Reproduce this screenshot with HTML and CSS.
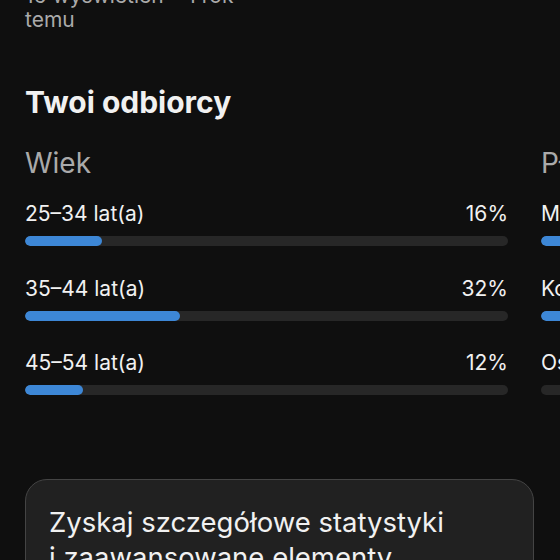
FILE: index.html
```html
<!DOCTYPE html>
<html lang="pl">
<head>
<meta charset="utf-8">
<link rel="stylesheet" href="styles.css">
</head>
<body>
<main class="page">
  <p class="meta">16 wyświetleń • 1 rok temu</p>
  <h2 class="title">Twoi odbiorcy</h2>
  <div class="columns">
    <section class="col">
      <h3 class="col-title">Wiek</h3>
      <div class="row">
        <div class="row-head"><span>25–34 lat(a)</span><span>16%</span></div>
        <div class="track"><div class="fill" style="width:16%"></div></div>
      </div>
      <div class="row">
        <div class="row-head"><span>35–44 lat(a)</span><span>32%</span></div>
        <div class="track"><div class="fill" style="width:32%"></div></div>
      </div>
      <div class="row">
        <div class="row-head"><span>45–54 lat(a)</span><span>12%</span></div>
        <div class="track"><div class="fill" style="width:12%"></div></div>
      </div>
    </section>
    <section class="col">
      <h3 class="col-title">Płeć</h3>
      <div class="row">
        <div class="row-head"><span>Mężczyźni</span><span>72%</span></div>
        <div class="track"><div class="fill" style="width:72%"></div></div>
      </div>
      <div class="row">
        <div class="row-head"><span>Kobiety</span><span>28%</span></div>
        <div class="track"><div class="fill" style="width:28%"></div></div>
      </div>
      <div class="row">
        <div class="row-head"><span>Osoby niebinarne</span><span>0%</span></div>
        <div class="track"><div class="fill" style="width:0%"></div></div>
      </div>
    </section>
  </div>
  <div class="card">
    <p class="card-text">Zyskaj szczegółowe statystyki i&nbsp;zaawansowane elementy sterujące w&nbsp;YouTube Studio</p>
  </div>
</main>
</body>
</html>
```
FILE: styles.css
```css
html, body {
  margin: 0;
  padding: 0;
  background: #0f0f0f;
  overflow: hidden;
}
body {
  font-family: Inter, "Open Sans", Arial, sans-serif;
  color: #f1f1f1;
}
.page {
  padding: 0 0 0 25px;
  width: 1100px;
}
.meta {
  margin: -16px 0 0;
  width: 215px;
  font-size: 21px;
  line-height: 24px;
  color: #aaaaaa;
}
.title {
  margin: 53px 0 0;
  font-size: 30px;
  line-height: 34px;
  font-weight: 700;
  color: #f1f1f1;
}
.columns {
  display: flex;
  gap: 33px;
  margin-top: 27px;
}
.col {
  width: 483px;
  flex: none;
}
.col-title {
  margin: 0;
  font-size: 28px;
  line-height: 34px;
  font-weight: 400;
  color: #aaaaaa;
}
.row {
  margin-top: 21px;
}
.row + .row {
  margin-top: 29.5px;
}
.row-head {
  display: flex;
  justify-content: space-between;
  font-size: 21px;
  line-height: 26px;
}
.track {
  margin-top: 9px;
  height: 10px;
  border-radius: 5px;
  background: #272727;
  overflow: hidden;
}
.fill {
  height: 100%;
  border-radius: 5px;
  background: #3d87d6;
}
.card {
  margin-top: 84px;
  width: 509px;
  box-sizing: border-box;
  border: 1.5px solid #444444;
  border-radius: 22px;
  background: #212121;
  padding: 25px 23px;
}
.card-text {
  margin: 0;
  font-size: 27.5px;
  line-height: 35px;
  color: #f1f1f1;
}
```
